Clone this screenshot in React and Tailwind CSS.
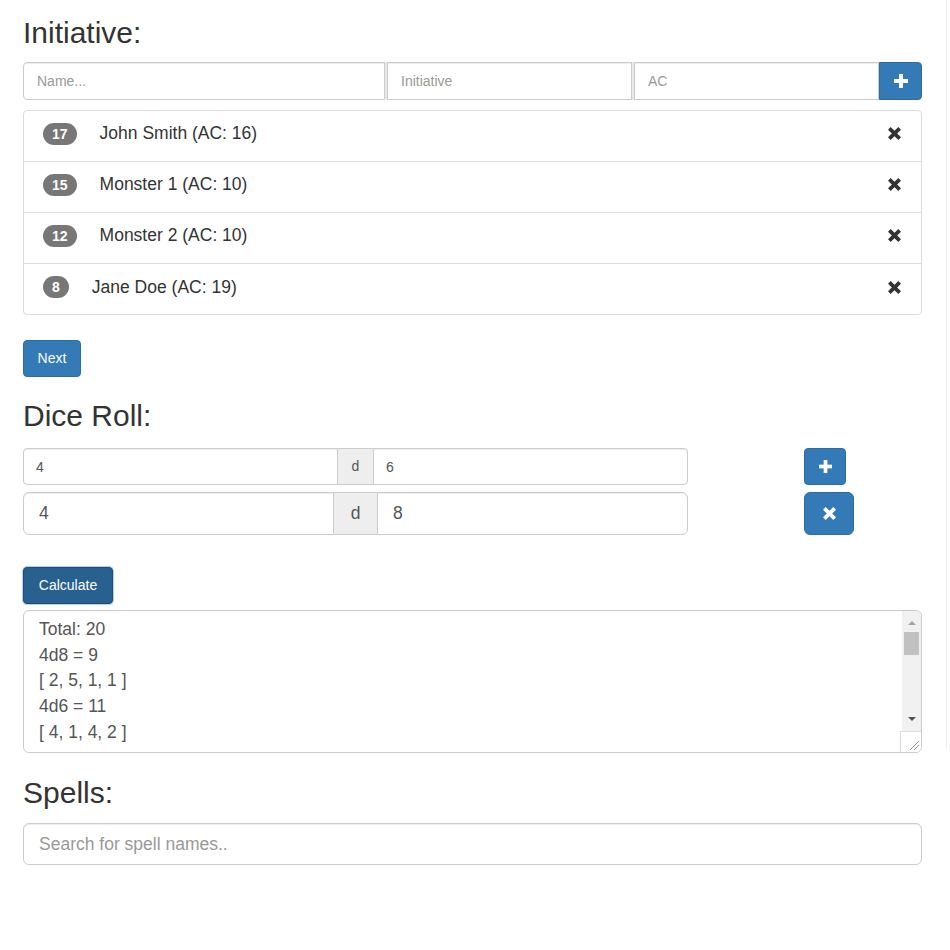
import React from "react";

const XIcon = ({ className }) => (
  <svg viewBox="0 0 16 16" className={className}>
    <path d="M2.5 2.5 L13.5 13.5 M13.5 2.5 L2.5 13.5" stroke="currentColor" strokeWidth="4" fill="none" />
  </svg>
);

const PlusIcon = ({ className }) => (
  <svg viewBox="0 0 14 14" className={className}>
    <rect x="5" y="0" width="4" height="14" fill="currentColor" />
    <rect x="0" y="5" width="14" height="4" fill="currentColor" />
  </svg>
);

const combatants = [
  { init: 17, name: "John Smith (AC: 16)" },
  { init: 15, name: "Monster 1 (AC: 10)" },
  { init: 12, name: "Monster 2 (AC: 10)" },
  { init: 8, name: "Jane Doe (AC: 19)" },
];

const inset = "shadow-[inset_0_1px_1px_rgba(0,0,0,0.075)]";

export default function App() {
  return (
    <div className="flex bg-white font-['Liberation_Sans',Arial,sans-serif] text-[#333]">
      <div className="w-[946px] pl-[23px] pr-[24px] pb-[80px]">
        <h2 className="mt-[16px] text-[30px] leading-[33px] text-[#333]">Initiative:</h2>

        <div className="mt-[13px] flex h-[38px]">
          <input
            placeholder="Name..."
            className={`w-[362px] h-full border border-[#ccc] rounded-l-[4px] px-[13px] text-[14px] text-[#555] placeholder:text-[#999] outline-none ${inset}`}
          />
          <div className="w-[2px] h-full bg-[#e8e8e8]" />
          <input
            placeholder="Initiative"
            className={`w-[245px] h-full border border-[#ccc] px-[13px] text-[14px] text-[#555] placeholder:text-[#999] outline-none ${inset}`}
          />
          <div className="w-[2px] h-full bg-[#e8e8e8]" />
          <input
            placeholder="AC"
            className={`w-[245px] h-full border border-[#ccc] px-[13px] text-[14px] text-[#555] placeholder:text-[#999] outline-none ${inset}`}
          />
          <button className="w-[43px] h-full bg-[#337ab7] border border-[#2e6da4] rounded-r-[4px] flex items-center justify-center text-white">
            <PlusIcon className="w-[14px] h-[14px]" />
          </button>
        </div>

        <div className="mt-[10px] border border-[#ddd] rounded-[4px]">
          {combatants.map((c, i) => (
            <div
              key={c.name}
              className={`flex items-center pl-[19px] pr-[19px] ${i < combatants.length - 1 ? "h-[51px] pb-[5px] border-b border-[#ddd]" : "h-[50px] pb-[4px]"}`}
            >
              <span className="inline-flex items-center justify-center h-[22px] px-[9px] rounded-full bg-[#777] text-white text-[14px] font-bold leading-none">
                {c.init}
              </span>
              <span className="ml-[23px] text-[17.5px] text-[#333]">{c.name}</span>
              <XIcon className="ml-auto w-[15px] h-[15px] text-[#333]" />
            </div>
          ))}
        </div>

        <button className="mt-[25px] w-[58px] h-[37px] bg-[#337ab7] border border-[#2e6da4] rounded-[4px] text-white text-[14px] flex items-center justify-center">
          Next
        </button>

        <h2 className="mt-[22px] text-[30px] leading-[33px] text-[#333]">Dice Roll:</h2>

        <div className="mt-[16px] flex items-start">
          <div className="flex w-[665px] h-[37px]">
            <input
              defaultValue="4"
              className={`w-[315px] h-full border border-[#ccc] rounded-l-[4px] px-[12px] text-[14px] text-[#555] outline-none ${inset}`}
            />
            <div className="w-[35px] h-full bg-[#eee] border-y border-[#ccc] flex items-center justify-center text-[14px] text-[#555]">
              d
            </div>
            <input
              defaultValue="6"
              className={`w-[315px] h-full border border-[#ccc] rounded-r-[4px] px-[12px] text-[14px] text-[#555] outline-none ${inset}`}
            />
          </div>
          <button className="ml-[116px] w-[42px] h-[37px] bg-[#337ab7] border border-[#2e6da4] rounded-[4px] flex items-center justify-center text-white">
            <PlusIcon className="w-[13px] h-[13px]" />
          </button>
        </div>

        <div className="mt-[7px] flex items-start">
          <div className="flex w-[665px] h-[43px]">
            <input
              defaultValue="4"
              className={`w-[311px] h-full border border-[#ccc] rounded-l-[6px] px-[15px] text-[17.5px] text-[#555] outline-none ${inset}`}
            />
            <div className="w-[43px] h-full bg-[#eee] border-y border-[#ccc] flex items-center justify-center text-[17.5px] text-[#555]">
              d
            </div>
            <input
              defaultValue="8"
              className={`w-[311px] h-full border border-[#ccc] rounded-r-[6px] px-[15px] text-[17.5px] text-[#555] outline-none ${inset}`}
            />
          </div>
          <button className="ml-[116px] w-[50px] h-[43px] bg-[#337ab7] border border-[#2e6da4] rounded-[6px] flex items-center justify-center text-white">
            <XIcon className="w-[15px] h-[15px]" />
          </button>
        </div>

        <button className="mt-[32px] w-[90px] h-[37px] bg-[#286090] border border-[#204d74] rounded-[4px] text-white text-[14px] flex items-center justify-center shadow-[0_0_0_1px_rgba(102,150,220,0.45)]">
          Calculate
        </button>

        <div className="relative mt-[6px] h-[143px] border border-[#ccc] rounded-[6px] overflow-hidden px-[15px] pt-[6px] text-[17.5px] leading-[25.7px] text-[#555]">
          <div>Total: 20</div>
          <div>4d8 = 9</div>
          <div>[ 2, 5, 1, 1 ]</div>
          <div>4d6 = 11</div>
          <div>[ 4, 1, 4, 2 ]</div>
          <div className="absolute top-0 right-0 w-[19px] bottom-[21px] bg-[#f1f1f1]">
            <div className="mt-[10px] mx-auto w-0 h-0 border-x-[4px] border-x-transparent border-b-[4px] border-b-[#a3a3a3]" />
            <div className="mt-[7px] mx-[2px] h-[23px] bg-[#c1c1c1]" />
            <div className="absolute bottom-[10px] left-1/2 -translate-x-1/2 w-0 h-0 border-x-[4px] border-x-transparent border-t-[4px] border-t-[#505050]" />
          </div>
          <div className="absolute bottom-0 right-0 w-[21px] h-[21px] bg-white border-l border-t border-[#ddd]">
            <svg viewBox="0 0 20 20" className="w-full h-full">
              <path d="M18 9 L9 18 M18 13 L13 18" stroke="#999" strokeWidth="1" />
            </svg>
          </div>
        </div>

        <h2 className="mt-[23px] text-[30px] leading-[33px] text-[#333]">Spells:</h2>

        <input
          placeholder="Search for spell names.."
          className={`mt-[14px] w-full h-[42px] border border-[#ccc] rounded-[6px] px-[15px] text-[17.5px] text-[#555] placeholder:text-[#999] outline-none ${inset}`}
        />
      </div>
      <div className="w-px h-[748px] bg-[#eeeeee]" />
    </div>
  );
}
